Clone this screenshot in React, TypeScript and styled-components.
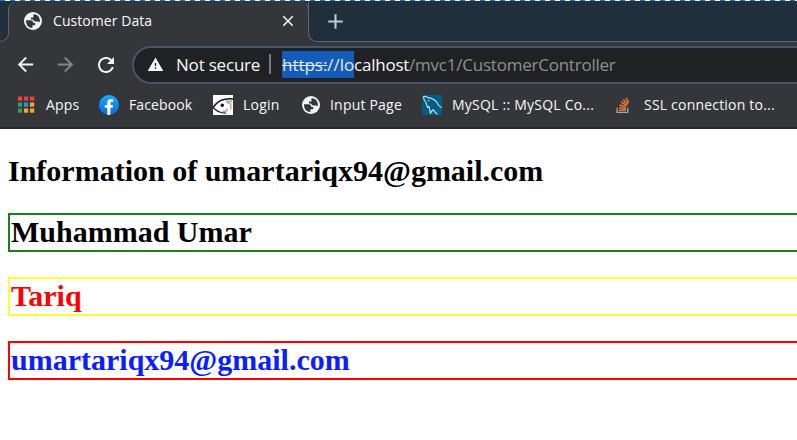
import React from "react";
import styled, { createGlobalStyle } from "styled-components";
import { MdArrowBack, MdArrowForward, MdRefresh, MdClose, MdAdd, MdWarning } from "react-icons/md";

const GlobalStyle = createGlobalStyle`
  html, body { margin: 0; padding: 0; background: #fff; overflow: hidden; }
  *, *::before, *::after { box-sizing: border-box; }
`;

const Window = styled.div`
  width: 100vw;
  height: 100vh;
  overflow: hidden;
  background: #fff;
`;

const Chrome = styled.header`
  height: 129px;
  display: flex;
  flex-direction: column;
  background: #35363a;
  color: #f8f9fa;
  font-family: "Open Sans", "Noto Sans", sans-serif;
  border-bottom: 2px solid #28292c;
`;

const TopEdge = styled.div`
  height: 1px;
  flex: none;
  background: repeating-linear-gradient(90deg, #0078d7 0 5px, #fff 5px 10px);
`;

const TabStrip = styled.div`
  display: flex;
  height: 41px;
  flex: none;
`;

const StripStart = styled.div`
  width: 9px;
  flex: none;
  background: #202f3b;
  border-right: 1px solid #5a6771;
  border-bottom: 1px solid #5a6771;
  border-bottom-right-radius: 9px;
`;

const TabSlot = styled.div`
  width: 301px;
  flex: none;
  margin: 0 -1px;
  background: linear-gradient(#202f3b 0 20px, transparent 20px);
`;

const Tab = styled.div`
  height: 30px;
  display: flex;
  align-items: center;
  padding: 9px 11px 0 15px;
  background: #35363a;
  border: solid #5a6771;
  border-width: 0 1px;
  border-radius: 9px 9px 0 0;
`;

const TabTitle = styled.span`
  flex: 1;
  margin-left: 11px;
  font-size: 14px;
  line-height: 20px;
  letter-spacing: 0.06px;
  white-space: nowrap;
`;

const StripRest = styled.div`
  flex: 1;
  display: flex;
  align-items: center;
  padding-left: 14px;
  background: #202f3b;
  border-left: 1px solid #5a6771;
  border-bottom: 1px solid #5a6771;
  border-bottom-left-radius: 9px;
  color: #c5cacd;
`;

const Toolbar = styled.div`
  height: 42px;
  flex: none;
  display: flex;
  align-items: center;
  padding: 4px 0 0 14px;
`;

const NavIcon = styled.span<{ $dim?: boolean }>`
  display: flex;
  width: 40px;
  flex: none;
  padding-bottom: 1px;
  color: ${(p) => (p.$dim ? "#85878a" : "#f1f3f4")};
`;

const AddressBar = styled.div`
  flex: 1;
  height: 38px;
  margin: 0 -30px 0 -2px;
  display: flex;
  align-items: center;
  padding: 0 0 2px 13px;
  background: #202124;
  border: 2px solid #46566b;
  border-radius: 19px;
  font-size: 17px;
  line-height: 27px;
  white-space: nowrap;
`;

const Security = styled.span`
  margin-left: 12px;
  width: 84px;
  letter-spacing: -0.2px;
`;

const Divider = styled.span`
  width: 2px;
  height: 20px;
  margin: 0 11px 0 9px;
  background: #77797c;
`;

const Url = styled.span`
  display: flex;
  color: #8e8f91;
  letter-spacing: -0.23px;
`;

const Selected = styled.span`
  background: #135cb9;
  color: #e3eaf3;
  width: 72px;
  letter-spacing: -0.03px;
`;

const Struck = styled.span`
  text-decoration: line-through;
  text-decoration-thickness: 1px;
`;

const Host = styled.span`
  color: #f8f9fa;
`;

const Bookmarks = styled.nav`
  flex: 1;
  display: flex;
  align-items: center;
  padding: 0 0 1px 16px;
`;

const Bookmark = styled.div<{ $width: number; $gap?: number }>`
  width: ${(p) => p.$width}px;
  flex: none;
  display: flex;
  align-items: center;
  gap: ${(p) => p.$gap ?? 10}px;
`;

const BookmarkLabel = styled.span<{ $track?: number }>`
  font-size: 14px;
  line-height: 20px;
  white-space: nowrap;
  letter-spacing: ${(p) => p.$track ?? 0.2}px;
`;

const Page = styled.main`
  padding-left: 8px;
  padding-top: 25px;
  font-family: "Liberation Serif", "Times New Roman", serif;
`;

const Heading = styled.h2<{ $border?: string; $color?: string }>`
  margin: 0 -10px 25px 0;
  height: ${(p) => (p.$border ? 39 : 34)}px;
  padding-left: ${(p) => (p.$border ? 1 : 0)}px;
  border: ${(p) => (p.$border ? `2px solid ${p.$border}` : "none")};
  color: ${(p) => p.$color ?? "#000"};
  font-size: 30px;
  font-weight: 700;
  line-height: 34px;
  white-space: nowrap;
`;

const Icon = styled.svg`
  display: block;
  flex: none;
`;

const Globe = () => (
  <Icon width="18" height="18" viewBox="0 0 18 18">
    <circle cx="9" cy="9" r="9" fill="#f1f3f4" />
    <path
      d="M2 8.2H6.3Q9.2 8.4 9.4 11H11.2V13.2H8.5V15.8Q4.4 15.9 2.8 12.4Q1.8 10.5 2 8.2Z M9.4 2.2Q13.2 2.1 15 5.2Q16.3 7.6 15.7 10.3Q15 9.4 13.3 9.4H10.7L8.8 7.5H7V5.6H9.4Z"
      fill="#35363a"
    />
  </Icon>
);

const APP_COLORS = ["#ef3e3e", "#ef3e3e", "#ef3e3e", "#35a05b", "#2196f3", "#f9a825", "#35a05b", "#f9a825", "#f9a825"];

const AppsIcon = () => (
  <Icon width="19" height="18" viewBox="0 0 19 18">
    {APP_COLORS.map((fill, i) => (
      <rect key={i} x={2 + (i % 3) * 6} y={0.5 + Math.floor(i / 3) * 6} width="4.2" height="4.2" fill={fill} />
    ))}
  </Icon>
);

const FacebookIcon = () => (
  <Icon width="20" height="20" viewBox="0 0 20 20">
    <defs>
      <linearGradient id="fb" x1="0" y1="0" x2="0" y2="1">
        <stop offset="0" stopColor="#19aaff" />
        <stop offset="1" stopColor="#0867e0" />
      </linearGradient>
    </defs>
    <circle cx="10" cy="10" r="10" fill="url(#fb)" />
    <path
      d="M8.3 19.8V12.8H5.8V10H8.3V8Q8.3 4.1 12.1 4.1Q13.2 4.1 14.3 4.4V6.8H12.9Q11.4 6.8 11.4 8.2V10H14.1L13.7 12.8H11.4V19.8Q9.8 20.1 8.3 19.8Z"
      fill="#fff"
    />
  </Icon>
);

const FishIcon = () => (
  <Icon width="20" height="20" viewBox="0 0 20 20" fill="none">
    <path d="M0 0H20V20H0Z" fill="#fff" />
    <path d="M13 6.4H19M14 8H16" stroke="#7db3ef" strokeWidth="1.6" />
    <path d="M16.5 7.5Q18.3 9 17.7 14.5" stroke="#f3a766" strokeWidth="1.8" />
    <path d="M0 13Q4 5.8 12 4.3Q16 3.5 20 4" stroke="#171717" strokeWidth="1.5" />
    <path d="M0 12.3Q4.5 17.8 13 18.2" stroke="#171717" strokeWidth="1.3" />
    <path d="M9.6 16.2Q13.8 17.2 14.2 13.5" stroke="#86aee0" strokeWidth="1.7" />
    <circle cx="9.3" cy="10.3" r="1.7" fill="#101010" />
  </Icon>
);

const MysqlIcon = () => (
  <Icon width="20" height="20" viewBox="0 0 20 20" fill="none">
    <rect width="20" height="20" rx="1" fill="#055c86" />
    <path
      d="M1.2 1.8Q3.7 0.8 5.6 2.7Q12.1 3.2 15.2 7.9Q16.8 11.5 19.7 12.6M1.4 2Q1.9 5.1 3.8 7.1L5.5 12.4L7 11.4L8.4 18.4Q9.9 16 11.1 14.7Q13 17.6 15.5 19.3M6 5.5L7.4 6"
      stroke="#c6dce8"
      strokeWidth="1.2"
      strokeLinejoin="round"
    />
  </Icon>
);

const StackIcon = () => (
  <Icon width="15" height="17" viewBox="0.5 0 16 18" fill="none">
    <path d="M1.7 11.3V16.3H13V11.3" stroke="#a6a9ac" strokeWidth="1.4" />
    <path
      d="M3.7 14H10.9M3.8 11.4L11 12.4M4.2 8.5L11.2 10.7M5.8 5.2L12 9.1M8.2 2.7L13 8M11.4 1L14 6.4"
      stroke="#e87930"
      strokeWidth="1.7"
    />
  </Icon>
);

export default function App() {
  return (
    <Window>
      <GlobalStyle />
      <Chrome>
        <TopEdge />
        <TabStrip>
          <StripStart />
          <TabSlot>
            <Tab>
              <Globe />
              <TabTitle>Customer Data</TabTitle>
              <MdClose size={18} />
            </Tab>
          </TabSlot>
          <StripRest>
            <MdAdd size={25} />
          </StripRest>
        </TabStrip>
        <Toolbar>
          <NavIcon><MdArrowBack size={23} /></NavIcon>
          <NavIcon $dim><MdArrowForward size={23} /></NavIcon>
          <NavIcon><MdRefresh size={24} /></NavIcon>
          <AddressBar>
            <MdWarning size={17} />
            <Security>Not secure</Security>
            <Divider />
            <Url>
              <Selected><Struck>https:</Struck>//lo</Selected>
              <Host>calhost</Host>
              <span>/mvc1/CustomerController</span>
            </Url>
          </AddressBar>
        </Toolbar>
        <Bookmarks>
          <Bookmark $width={83} $gap={11}><AppsIcon /><BookmarkLabel>Apps</BookmarkLabel></Bookmark>
          <Bookmark $width={114}><FacebookIcon /><BookmarkLabel $track={0.1}>Facebook</BookmarkLabel></Bookmark>
          <Bookmark $width={89}><FishIcon /><BookmarkLabel>Login</BookmarkLabel></Bookmark>
          <Bookmark $width={120}><Globe /><BookmarkLabel>Input Page</BookmarkLabel></Bookmark>
          <Bookmark $width={194}><MysqlIcon /><BookmarkLabel $track={0.23}>MySQL :: MySQL Co...</BookmarkLabel></Bookmark>
          <Bookmark $width={181} $gap={13}><StackIcon /><BookmarkLabel>SSL connection to...</BookmarkLabel></Bookmark>
        </Bookmarks>
      </Chrome>
      <Page>
        <Heading>Information of umartariqx94@gmail.com</Heading>
        <Heading $border="#1e7e1a">Muhammad Umar</Heading>
        <Heading $border="#fffb38" $color="#ff0000">Tariq</Heading>
        <Heading $border="#ff0000" $color="#0a1eff">umartariqx94@gmail.com</Heading>
      </Page>
    </Window>
  );
}
